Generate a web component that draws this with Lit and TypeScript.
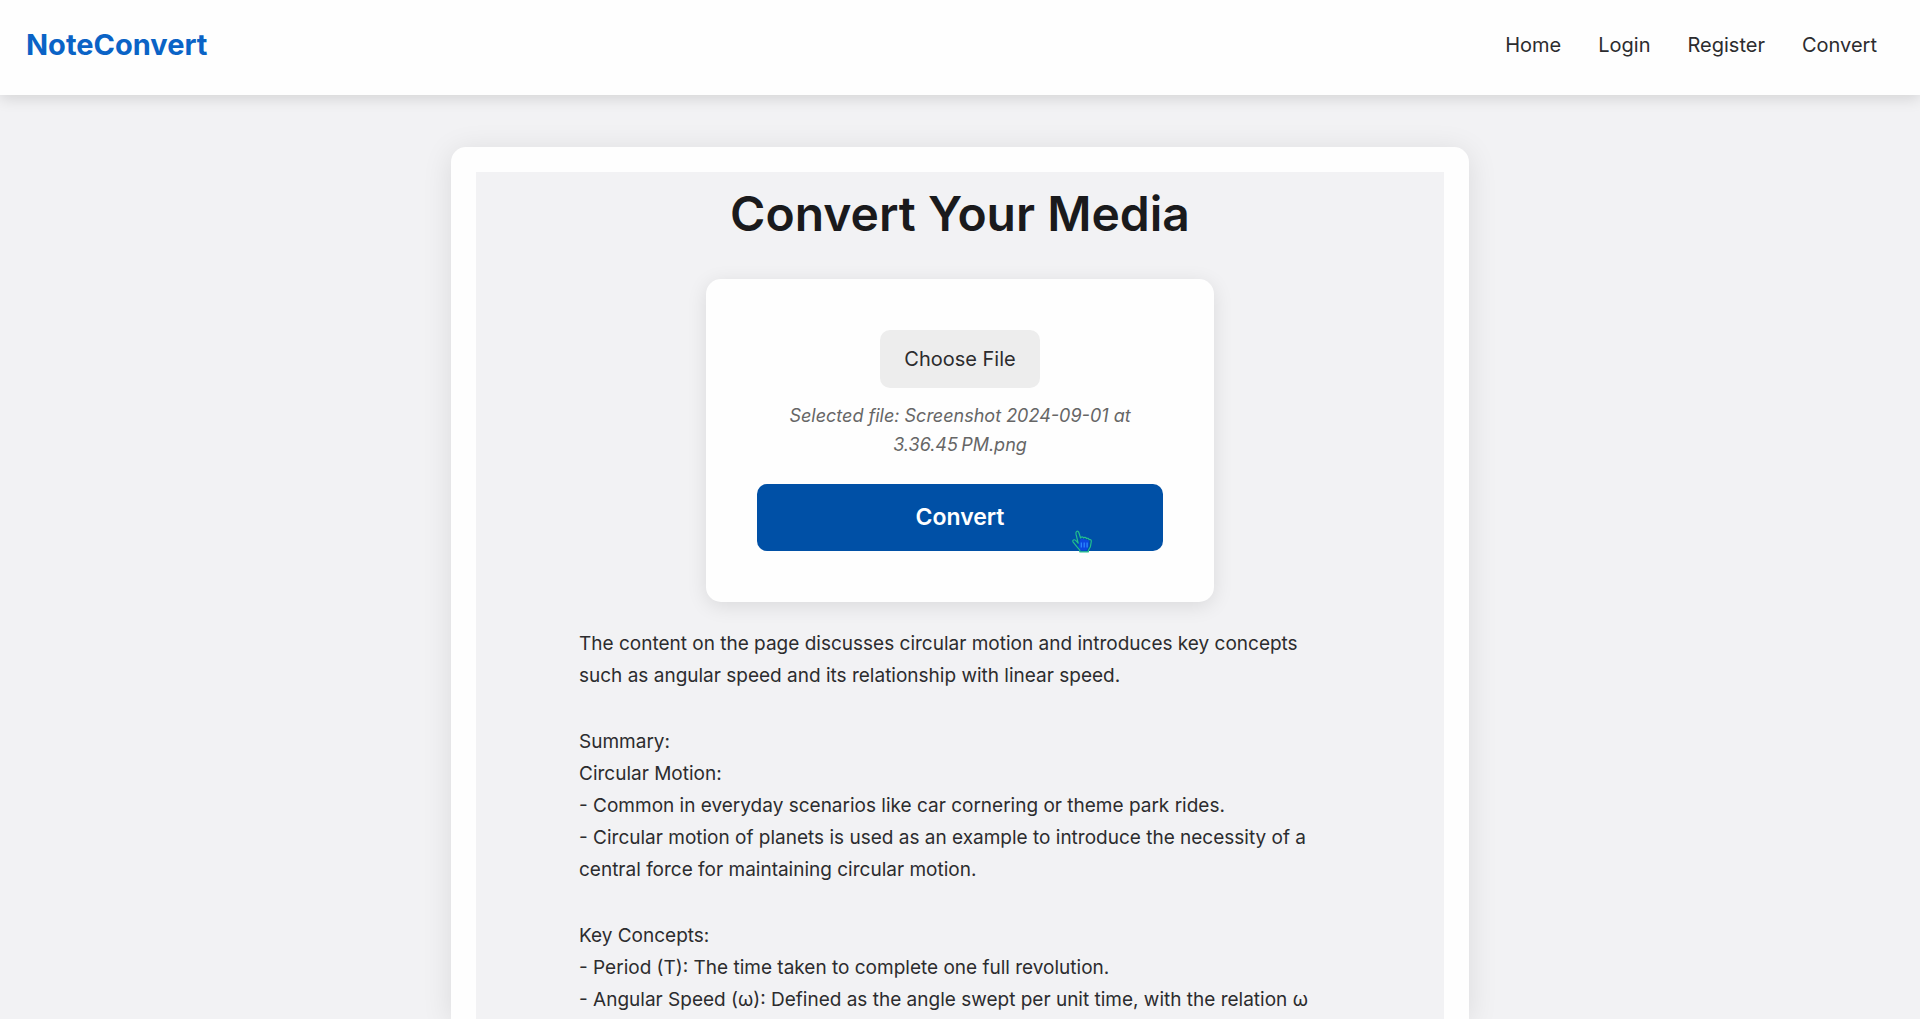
import { LitElement, html, css } from "lit";
import { customElement } from "lit/decorators.js";

const NAV = ["Home", "Login", "Register", "Convert"];

const SECTIONS: string[][] = [
  [
    "The content on the page discusses circular motion and introduces key concepts such as angular speed and its relationship with linear speed.",
  ],
  [
    "Summary:",
    "Circular Motion:",
    "- Common in everyday scenarios like car cornering or theme park rides.",
    "- Circular motion of planets is used as an example to introduce the necessity of a central force for maintaining circular motion.",
  ],
  [
    "Key Concepts:",
    "- Period (T): The time taken to complete one full revolution.",
    "- Angular Speed (ω): Defined as the angle swept per unit time, with the relation ω",
  ],
];

@customElement("site-header")
export class SiteHeader extends LitElement {
  static styles = css`
    :host {
      display: block;
      position: relative;
      background: #fefefe;
      box-shadow: 0 4px 14px rgba(0, 0, 0, 0.12);
    }
    .bar {
      display: flex;
      justify-content: space-between;
      align-items: flex-start;
      padding: 25px 43px 30px 26px;
    }
    .logo {
      font-size: 29px;
      line-height: 40px;
      font-weight: 700;
      color: #0a63c6;
      text-decoration: none;
    }
    .links {
      display: flex;
      gap: 37px;
      margin: 0;
      padding: 0;
      list-style: none;
    }
    .link {
      font-size: 20px;
      line-height: 40px;
      color: #2c2c2e;
      text-decoration: none;
    }
  `;

  render() {
    return html`
      <header class="bar">
        <a class="logo" href="#">NoteConvert</a>
        <nav>
          <ul class="links">
            ${NAV.map((n) => html`<li><a class="link" href="#${n.toLowerCase()}">${n}</a></li>`)}
          </ul>
        </nav>
      </header>
    `;
  }
}

@customElement("convert-form")
export class ConvertForm extends LitElement {
  static styles = css`
    :host {
      display: block;
      width: 100%;
      max-width: 508px;
    }
    .form {
      display: flex;
      flex-direction: column;
      align-items: center;
      box-sizing: border-box;
      padding: 51px;
      border-radius: 15px;
      background: #fefefe;
      box-shadow: 0 4px 20px rgba(0, 0, 0, 0.1);
    }
    .file-input {
      position: absolute;
      width: 1px;
      height: 1px;
      opacity: 0;
    }
    .choose {
      padding: 13px 24px;
      border-radius: 10px;
      background: #ededed;
      color: #2c2c2e;
      font-size: 20px;
      line-height: 32px;
      cursor: pointer;
    }
    .selected {
      margin: 13px 0 25px;
      padding: 0 25px;
      color: #666;
      font-size: 18px;
      line-height: 29px;
      font-style: italic;
      text-align: center;
    }
    .submit {
      position: relative;
      width: 100%;
      padding: 17px;
      border: 0;
      border-radius: 10px;
      background: #0050a6;
      color: #fff;
      font-family: inherit;
      font-size: 23px;
      line-height: 33px;
      font-weight: 600;
      cursor: pointer;
    }
    .pointer {
      position: absolute;
      right: 70px;
      bottom: -2px;
      width: 22px;
      height: 24px;
    }
  `;

  render() {
    return html`
      <form class="form" @submit=${(e: Event) => e.preventDefault()}>
        <input class="file-input" id="file" type="file" />
        <label class="choose" for="file">Choose File</label>
        <p class="selected">Selected file: Screenshot 2024-09-01 at 3.36.45&#x202f;PM.png</p>
        <button class="submit" type="submit">
          Convert
          <svg class="pointer" viewBox="0 0 22 24" aria-hidden="true">
            <path
              d="M7.2 14.2 5 5.2C4.400 1.800 7.200 1 8 4l1.600 5c.5-1.500 2.600-1.400 3 0 .7-1 2.500-.7 2.900.6.900-.7 2.400-.2 2.600 1 1.200-.4 2.400.4 2.200 1.900l-.9 5.200-2 3.500v1.600H8.800v-1.700L5.600 17.400 2 12.800c-.9-1.600 1.200-2.800 2.600-1.400z"
              fill="#0050a6"
            />
            <path d="M9 11.500 10 9.500 18 11.500 17.500 18 15.500 21.500H9.500L7.500 17.500z" fill="#0a48e0" />
            <path
              d="M7.2 14.2 5 5.2C4.400 1.800 7.200 1 8 4l1.600 5c.5-1.500 2.600-1.400 3 0 .7-1 2.500-.7 2.900.6.900-.7 2.400-.2 2.600 1 1.200-.4 2.400.4 2.200 1.900l-.9 5.200-2 3.500v1.600H8.800v-1.700L5.600 17.400 2 12.800c-.9-1.600 1.200-2.800 2.600-1.400z"
              fill="none"
              stroke="#22c08e"
              stroke-width="1.200"
              stroke-linejoin="round"
            />
            <path d="M10.300 13.500v5M13.200 13.500v5M16.100 13.500v5" stroke="#2f8dff" stroke-width="1.200" />
          </svg>
        </button>
      </form>
    `;
  }
}

@customElement("app-root")
export class AppRoot extends LitElement {
  static styles = css`
    :host {
      display: flex;
      flex-direction: column;
      min-height: 100vh;
      background: #f2f2f4;
      color: #2c2c2e;
      font-family: Inter, "Liberation Sans", sans-serif;
    }
    .main {
      display: flex;
      flex: 1;
      flex-direction: column;
      align-items: center;
      padding-top: 52px;
    }
    .card {
      display: flex;
      flex: 1;
      box-sizing: border-box;
      width: 53%;
      padding: 25px 25px 0;
      border-radius: 15px 15px 0 0;
      background: #fefefe;
      box-shadow: 0 4px 30px rgba(0, 0, 0, 0.1);
    }
    .panel {
      display: flex;
      flex: 1;
      flex-direction: column;
      align-items: center;
      background: #f2f2f4;
    }
    .title {
      margin: 0 0 25px;
      padding: 6px 0 4px;
      font-size: 48px;
      line-height: 72px;
      font-weight: 600;
      color: #1a1a1c;
    }
    .result {
      display: flex;
      flex-direction: column;
      gap: 34px;
      width: 100%;
      max-width: 762px;
      margin-top: 26px;
    }
    .line {
      margin: 0;
      font-size: 19px;
      line-height: 32px;
    }
  `;

  render() {
    return html`
      <site-header></site-header>
      <main class="main">
        <section class="card">
          <div class="panel">
            <h1 class="title">Convert Your Media</h1>
            <convert-form></convert-form>
            <article class="result">
              ${SECTIONS.map(
                (lines) => html`<div>${lines.map((l) => html`<p class="line">${l}</p>`)}</div>`
              )}
            </article>
          </div>
        </section>
      </main>
    `;
  }
}
